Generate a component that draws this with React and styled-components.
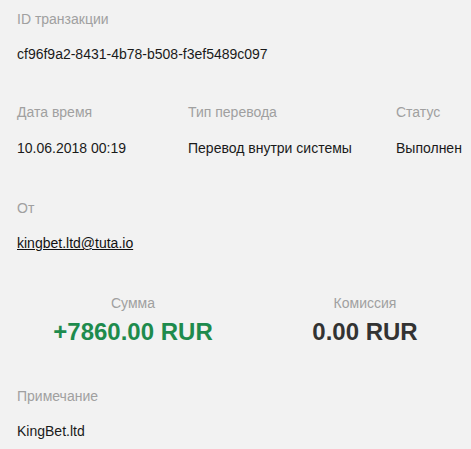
import styled, { createGlobalStyle } from 'styled-components';

const GlobalStyle = createGlobalStyle`
  html, body {
    margin: 0;
    background: #f2f2f2;
  }
  body {
    font-family: "Liberation Sans", Arial, sans-serif;
    font-size: 14px;
    color: #1a1a1a;
  }
`;

const Page = styled.div`
  padding: 9px 17px 0;
  overflow: hidden;
`;

const Section = styled.div`
  margin-top: ${(p) => p.$gap ?? 0}px;
`;

const Label = styled.div`
  line-height: 20px;
  color: #a0a0a0;
  text-align: ${(p) => (p.$center ? 'center' : 'left')};
`;

const Value = styled.div`
  line-height: 20px;
  margin-top: ${(p) => p.$gap ?? 16}px;
  white-space: nowrap;
`;

const Link = styled.a`
  color: #111;
  text-decoration: underline;
`;

const InfoGrid = styled.div`
  display: grid;
  grid-template-columns: 171px 208px auto;
`;

const AmountGrid = styled.div`
  display: grid;
  grid-template-columns: 232px 232px;
  text-align: center;
`;

const Amount = styled.div`
  margin-top: 5px;
  font-size: 24px;
  line-height: 28px;
  font-weight: 700;
  white-space: nowrap;
  color: ${(p) => (p.$positive ? '#1e8b4d' : '#333333')};
`;

const info = [
  { label: 'Дата время', value: '10.06.2018 00:19' },
  { label: 'Тип перевода', value: 'Перевод внутри системы' },
  { label: 'Статус', value: 'Выполнен' },
];

export default function App() {
  return (
    <>
      <GlobalStyle />
      <Page>
        <Section>
          <Label>ID транзакции</Label>
          <Value $gap={15}>cf96f9a2-8431-4b78-b508-f3ef5489c097</Value>
        </Section>

        <Section $gap={38}>
          <InfoGrid>
            {info.map((item) => (
              <div key={item.label}>
                <Label>{item.label}</Label>
                <Value $gap={16}>{item.value}</Value>
              </div>
            ))}
          </InfoGrid>
        </Section>

        <Section $gap={40}>
          <Label>От</Label>
          <Value $gap={15}>
            <Link href="#">kingbet.ltd@tuta.io</Link>
          </Value>
        </Section>

        <Section $gap={40}>
          <AmountGrid>
            <div>
              <Label $center>Сумма</Label>
              <Amount $positive>+7860.00 RUR</Amount>
            </div>
            <div>
              <Label $center>Комиссия</Label>
              <Amount>0.00 RUR</Amount>
            </div>
          </AmountGrid>
        </Section>

        <Section $gap={40}>
          <Label>Примечание</Label>
          <Value $gap={15}>KingBet.ltd</Value>
        </Section>
      </Page>
    </>
  );
}
